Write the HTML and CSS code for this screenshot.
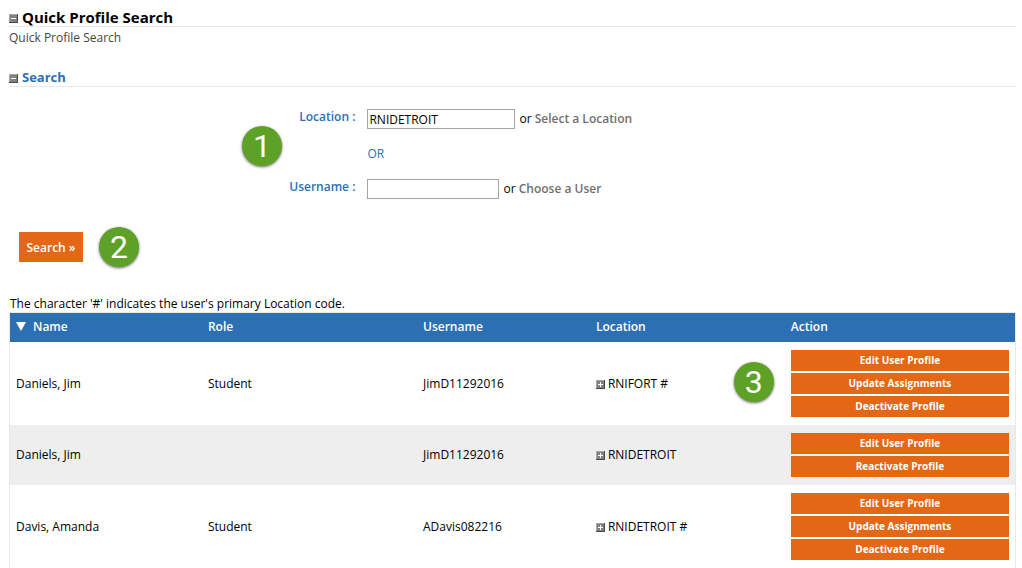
FILE: index.html
```html
<!DOCTYPE html>
<html lang="en">
<head>
    <meta charset="UTF-8">
    <meta name="viewport" content="width=device-width, initial-scale=1.0">
    <title>Quick Profile Search</title>
    <link rel="stylesheet" href="styles.css">
</head>
<body>
    <!-- Shared plus / minus toggle icons -->
    <svg class="sprite" aria-hidden="true">
        <symbol id="minus" viewBox="0 0 9 9">
            <rect width="9" height="9" fill="#4a4a4a"/>
            <rect width="8" height="8" fill="#a8a8a8"/>
            <rect x="1" y="1" width="7" height="7" fill="#808080"/>
            <rect x="2" y="4" width="5" height="1" fill="#fff"/>
        </symbol>
        <symbol id="plus" viewBox="0 0 9 9">
            <rect width="9" height="9" fill="#4a4a4a"/>
            <rect width="8" height="8" fill="#a8a8a8"/>
            <rect x="1" y="1" width="7" height="7" fill="#808080"/>
            <rect x="2" y="4" width="5" height="1" fill="#fff"/>
            <rect x="4" y="2" width="1" height="5" fill="#fff"/>
        </symbol>
    </svg>

    <div class="container">
        <h1><svg class="toggle"><use href="#minus"/></svg>Quick Profile Search</h1>
        <p class="subtitle">Quick Profile Search</p>

        <h2><svg class="toggle"><use href="#minus"/></svg>Search</h2>
        <form class="search-form">
            <div class="fields">
                <span class="step step-fields">1</span>
                <label for="location">Location :</label>
                <div class="field">
                    <input type="text" id="location" name="location" class="location-input" value="RNIDETROIT">
                    <span>or <a href="#">Select a Location</a></span>
                </div>
                <div class="or">OR</div>
                <label for="username">Username :</label>
                <div class="field">
                    <input type="text" id="username" name="username" class="username-input">
                    <span>or <a href="#">Choose a User</a></span>
                </div>
            </div>
            <div class="submit-row">
                <button type="submit" class="search-button">Search »</button>
                <span class="step">2</span>
            </div>
        </form>

        <p class="note">The character '#' indicates the user's primary Location code.</p>
        <table class="results">
            <colgroup>
                <col class="col-name">
                <col class="col-role">
                <col class="col-username">
                <col class="col-location">
                <col class="col-action">
            </colgroup>
            <thead>
                <tr>
                    <th><svg class="sort" viewBox="0 0 10 9"><path d="M0 0h10L5 9z" fill="#fff"/></svg>Name</th>
                    <th>Role</th>
                    <th>Username</th>
                    <th>Location</th>
                    <th>Action</th>
                </tr>
            </thead>
            <tbody>
                <tr>
                    <td>Daniels, Jim</td>
                    <td>Student</td>
                    <td>JimD11292016</td>
                    <td class="location-cell"><svg class="toggle"><use href="#plus"/></svg>RNIFORT #<span class="step step-actions">3</span></td>
                    <td>
                        <div class="actions">
                            <button type="button">Edit User Profile</button>
                            <button type="button">Update Assignments</button>
                            <button type="button">Deactivate Profile</button>
                        </div>
                    </td>
                </tr>
                <tr>
                    <td>Daniels, Jim</td>
                    <td></td>
                    <td>JimD11292016</td>
                    <td><svg class="toggle"><use href="#plus"/></svg>RNIDETROIT</td>
                    <td>
                        <div class="actions">
                            <button type="button">Edit User Profile</button>
                            <button type="button">Reactivate Profile</button>
                        </div>
                    </td>
                </tr>
                <tr>
                    <td>Davis, Amanda</td>
                    <td>Student</td>
                    <td>ADavis082216</td>
                    <td><svg class="toggle"><use href="#plus"/></svg>RNIDETROIT #</td>
                    <td>
                        <div class="actions">
                            <button type="button">Edit User Profile</button>
                            <button type="button">Update Assignments</button>
                            <button type="button">Deactivate Profile</button>
                        </div>
                    </td>
                </tr>
            </tbody>
        </table>
    </div>
</body>
</html>
```
FILE: styles.css
```css
* {
    box-sizing: border-box;
}
body {
    margin: 0;
    background-color: #fff;
    color: #000;
    font-family: "Trebuchet MS", "Open Sans", sans-serif;
    font-size: 12px;
    line-height: 16px;
}
.sprite {
    display: none;
}
.container {
    padding: 7px 6px 0 9px;
}
h1, h2, p {
    margin: 0;
}
h1, h2 {
    display: flex;
    align-items: center;
    gap: 4px;
    height: 20px;
    border-bottom: 1px solid #e8e8e8;
    font-weight: 700;
}
h1 {
    font-size: 15px;
}
h2 {
    margin-top: 21px;
    color: #2c70b3;
    font-size: 13px;
}
.toggle {
    width: 9px;
    height: 9px;
    flex: none;
}
h1 .toggle, h2 .toggle {
    margin-top: 3px;
}
.subtitle {
    margin-top: 3px;
    color: #444;
}
.fields {
    display: grid;
    grid-template-columns: 35% 1fr;
    row-gap: 17px;
    padding-top: 22px;
    position: relative;
}
.fields label {
    padding-right: 6px;
    text-align: right;
    color: #2c70b3;
    font-weight: 600;
}
.field {
    display: flex;
    align-items: center;
    gap: 4px;
    padding-left: 6px;
}
.field input {
    height: 20px;
    padding: 0 1px;
    border: 1px solid #a5a5a5;
    font: inherit;
}
.location-input {
    width: 148px;
}
.username-input {
    width: 132px;
}
.field a {
    color: #6f6f6f;
    font-weight: 600;
    text-decoration: none;
}
.or {
    grid-column: 2;
    padding-left: 6px;
    color: #2c70b3;
}
/* Numbered green step markers */
.step {
    display: flex;
    align-items: center;
    justify-content: center;
    width: 40px;
    height: 40px;
    border-radius: 50%;
    background-color: #5da226;
    box-shadow: 0 1px 3px rgba(0, 0, 0, 0.6);
    color: #fff;
    font-family: Roboto, sans-serif;
    font-size: 32px;
    font-weight: 400;
    line-height: 40px;
}
.step-fields {
    position: absolute;
    top: 39px;
    left: 233px;
}
.step-actions {
    position: absolute;
    top: 20px;
    right: 11px;
}
.submit-row {
    display: flex;
    align-items: center;
    gap: 16px;
    margin-top: 28px;
    padding-left: 10px;
}
button {
    border: none;
    border-radius: 0;
    background-color: #e36714;
    color: #fff;
    font-family: inherit;
    font-weight: 700;
    cursor: pointer;
}
.search-button {
    width: 64px;
    height: 30px;
    padding: 0;
    font-size: 12px;
    font-weight: 600;
}
.note {
    margin-top: 29px;
    padding-left: 1px;
}
.results {
    width: 100%;
    table-layout: fixed;
    border-spacing: 0;
    border: 1px solid #e8e8e8;
    border-bottom: none;
}
.col-name {
    width: 19.1%;
}
.col-role {
    width: 21.4%;
}
.col-username {
    width: 17.2%;
}
.col-location {
    width: 19.4%;
}
.col-action {
    width: 22.9%;
}
.results th {
    height: 29px;
    padding: 0 6px 2px;
    background-color: #2c70b3;
    color: #fff;
    font-weight: 600;
    text-align: left;
}
.results td {
    padding: 8px 6px;
}
.results tbody tr:nth-child(even) {
    background-color: #eee;
}
.results .toggle {
    margin-right: 3px;
    vertical-align: -1px;
}
.sort {
    width: 10px;
    height: 9px;
    margin-right: 7px;
}
.location-cell {
    position: relative;
}
.actions {
    display: grid;
    gap: 2px;
}
.actions button {
    height: 21px;
    padding: 0 0 2px;
    font-size: 10px;
}
```
